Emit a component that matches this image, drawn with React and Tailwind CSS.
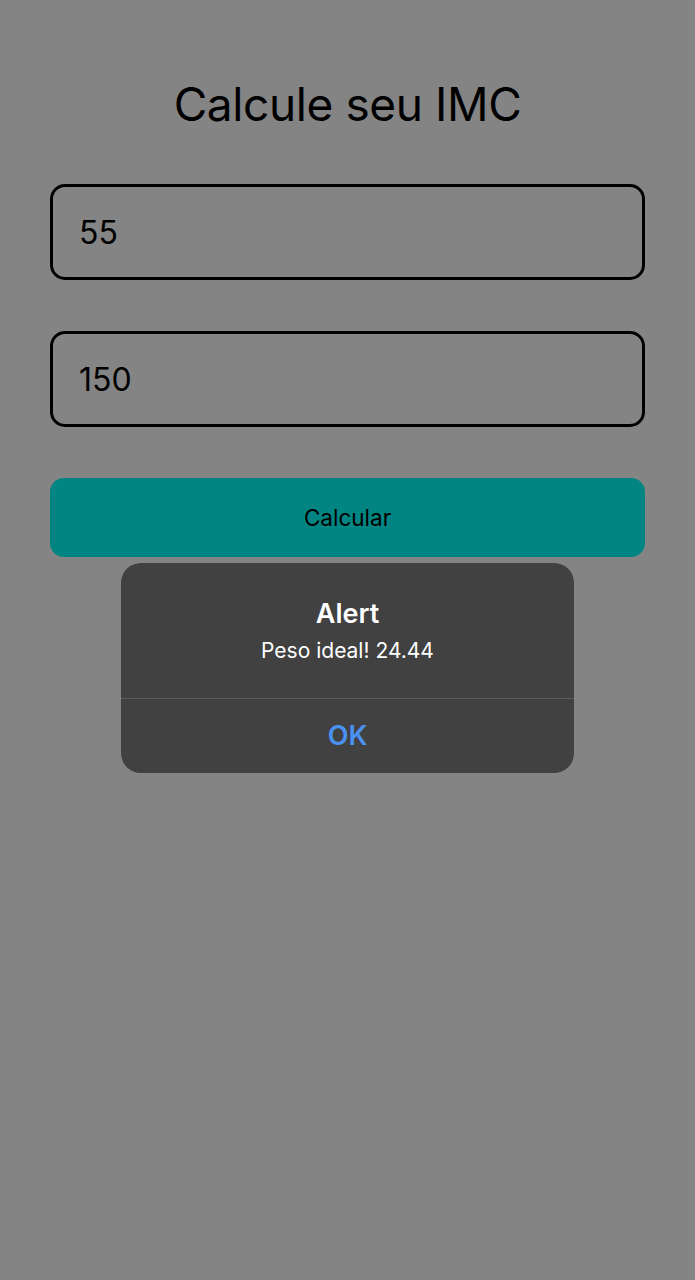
import React, { useState } from 'react';

const App = () => {
  const [weight, setWeight] = useState('55');
  const [height, setHeight] = useState('150');
  const [showAlert, setShowAlert] = useState(true);

  const imc = (Number(weight) / Math.pow(Number(height) / 100, 2)).toFixed(2);

  return (
    <div
      className="relative min-h-[1280px] w-full bg-[#848484] px-[50px]"
      style={{ fontFamily: 'Inter, "Noto Sans", sans-serif' }}
    >
      <h1 className="pt-[75px] text-center text-[46px] leading-[58px] font-normal text-black tracking-[-0.4px]">
        Calcule seu IMC
      </h1>

      <input
        value={weight}
        onChange={(e) => setWeight(e.target.value)}
        className="mt-[51px] block h-[96px] w-full rounded-[15px] border-[3px] border-black bg-transparent px-[26px] text-[32px] text-black outline-none"
      />

      <input
        value={height}
        onChange={(e) => setHeight(e.target.value)}
        className="mt-[51px] block h-[96px] w-full rounded-[15px] border-[3px] border-black bg-transparent px-[26px] text-[32px] text-black outline-none"
      />

      <button
        onClick={() => setShowAlert(true)}
        className="mt-[51px] flex h-[79px] w-full items-center justify-center rounded-[14px] bg-[#008582] text-[22.5px] text-black"
      >
        Calcular
      </button>

      {showAlert && (
        <div className="absolute left-[121px] top-[563px] w-[453px] overflow-hidden rounded-[20px] bg-[#414141]">
          <div className="flex h-[135px] flex-col items-center pt-[33px]">
            <p className="text-[27px] leading-[36px] font-semibold text-white">Alert</p>
            <p className="mt-[1px] text-[21px] leading-[36px] text-white">Peso ideal! {imc}</p>
          </div>
          <div className="h-px bg-[#5c5c5c]" />
          <button
            onClick={() => setShowAlert(false)}
            className="flex h-[74px] w-full items-center justify-center text-[27px] font-semibold text-[#4a92f2]"
          >
            OK
          </button>
        </div>
      )}
    </div>
  );
};

export default App;
